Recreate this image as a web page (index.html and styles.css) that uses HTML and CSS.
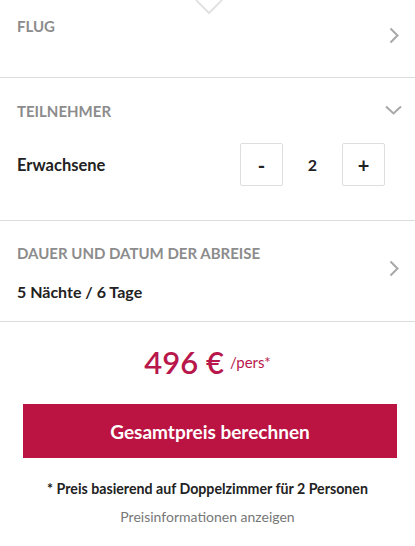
FILE: index.html
```html
<!DOCTYPE html>
<html lang="de">
<head>
<meta charset="utf-8">
<link rel="stylesheet" href="styles.css">
</head>
<body>
<div class="page">
  <svg class="notch" width="30" height="15" viewBox="0 0 30 15"><polyline points="1,0 14,13 27,0" fill="none" stroke="#e2e2e2" stroke-width="2"/></svg>

  <section class="sec sec-flug">
    <div class="sec-body">
      <div class="title">FLUG</div>
    </div>
    <svg class="chev-right" width="10" height="17" viewBox="0 0 10 17"><polyline points="1.5,1.5 8.5,8.5 1.5,15.5" fill="none" stroke="#a8a8a8" stroke-width="2"/></svg>
  </section>

  <section class="sec sec-teil">
    <div class="head">
      <div class="title">TEILNEHMER</div>
      <svg class="chev-down" width="17" height="10" viewBox="0 0 17 10"><polyline points="1,1.5 8.5,8.5 16,1.5" fill="none" stroke="#a8a8a8" stroke-width="2"/></svg>
    </div>
    <div class="row">
      <div class="label">Erwachsene</div>
      <div class="stepper">
        <button class="step">-</button>
        <span class="count">2</span>
        <button class="step">+</button>
      </div>
    </div>
  </section>

  <section class="sec sec-dauer">
    <div class="sec-body">
      <div class="title">DAUER UND DATUM DER ABREISE</div>
      <div class="value">5 Nächte / 6 Tage</div>
    </div>
    <svg class="chev-right" width="10" height="17" viewBox="0 0 10 17"><polyline points="1.5,1.5 8.5,8.5 1.5,15.5" fill="none" stroke="#a8a8a8" stroke-width="2"/></svg>
  </section>

  <div class="price">
    <span class="amount">496 €</span><span class="per">/pers*</span>
  </div>
  <div class="cta-wrap">
    <button class="cta">Gesamtpreis berechnen</button>
  </div>
  <p class="note">* Preis basierend auf Doppelzimmer für 2 Personen</p>
  <div class="link-wrap"><a class="link" href="#">Preisinformationen anzeigen</a></div>
</div>
</body>
</html>
```

FILE: styles.css
```css
* { box-sizing: border-box; }
html, body { margin: 0; padding: 0; background: #fff; }
body {
  font-family: Lato, "Open Sans", "DejaVu Sans", sans-serif;
  color: #222;
  width: 415px;
}
.page { position: relative; }
.notch { position: absolute; top: 0; left: 195px; }

.sec {
  border-bottom: 1px solid #dcdcdc;
  padding: 0 17px;
}
.sec-flug {
  height: 78px;
  display: flex;
  justify-content: space-between;
  align-items: flex-start;
  padding-top: 17px;
}
.sec-flug .chev-right { margin-top: 10px; margin-right: -1px; }

.title {
  font-size: 15px;
  font-weight: 700;
  color: #8c8c8c;
  line-height: 18px;
}

.sec-teil { height: 143px; }
.head {
  display: flex;
  justify-content: space-between;
  align-items: center;
  padding-top: 24px;
}
.chev-down { margin-right: -4px; margin-top: -3px; }
.row {
  display: flex;
  justify-content: space-between;
  align-items: center;
  margin-top: 23px;
  padding-right: 13px;
}
.label { font-size: 16.5px; font-weight: 700; color: #222; }
.stepper { display: flex; align-items: center; }
.step {
  width: 43px; height: 43px;
  border: 1px solid #dedede;
  border-radius: 2px;
  background: #fff;
  font-family: inherit;
  font-size: 20px;
  font-weight: 700;
  color: #222;
  padding: 0;
  display: flex; align-items: center; justify-content: center;
}
.count {
  width: 59px;
  text-align: center;
  font-size: 16px;
  font-weight: 700;
}

.sec-dauer {
  height: 101px;
  display: flex;
  justify-content: space-between;
  align-items: flex-start;
  padding-top: 23px;
}
.value { font-size: 16px; font-weight: 700; color: #222; margin-top: 20px; }
.sec-dauer .chev-right { margin-top: 16px; margin-right: -1px; }

.price {
  text-align: center;
  color: #b8174b;
  margin-top: 22px;
  line-height: 36px;
}
.amount { font-size: 31px; font-weight: 600; }
.per { font-size: 15px; margin-left: 6px; vertical-align: 6px; }

.cta-wrap { padding: 0 18px 0 23px; margin-top: 18px; }
.cta {
  width: 100%;
  height: 54px;
  background: #bc1442;
  border: 0;
  color: #fff;
  font-family: inherit;
  font-size: 19px;
  font-weight: 700;
}
.note {
  margin: 22px 0 0;
  text-align: center;
  font-size: 14.2px;
  font-weight: 700;
  color: #222;
}
.link-wrap { text-align: center; margin-top: 9px; }
.link {
  font-size: 14px;
  color: #777;
  text-decoration: none;
  border-bottom: 1px solid #ccc;
  padding-bottom: 1px;
}
```
